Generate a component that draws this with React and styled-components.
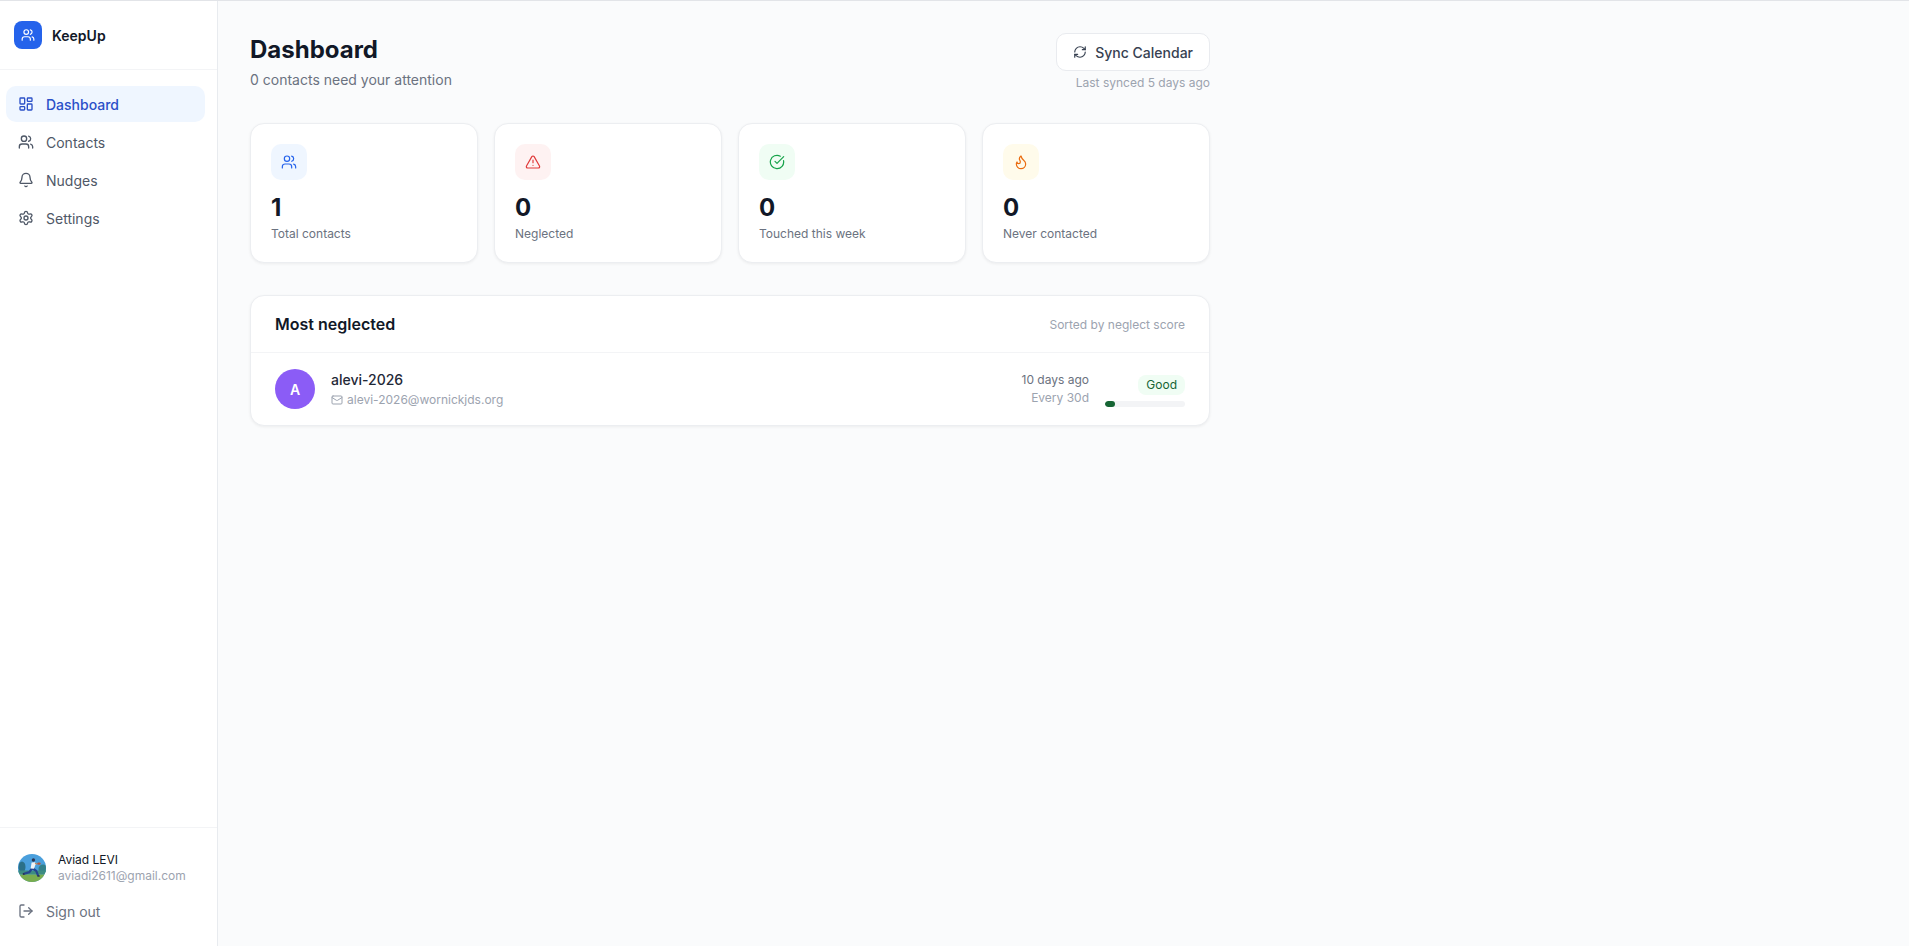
import React from "react";
import styled, { createGlobalStyle } from "styled-components";
import { Users, LayoutDashboard, Bell, Settings, LogOut, RefreshCw, TriangleAlert, CircleCheckBig, Flame, Mail } from "lucide-react";

const Global = createGlobalStyle`
  * { box-sizing: border-box; }
  html, body { margin: 0; padding: 0; height: 100%; }
  body { font-family: Inter, "Liberation Sans", sans-serif; background: #fafbfc; color: #111827; overflow: hidden; }
  #root { height: 100%; }
`;
const Shell = styled.div`display: flex; height: 946px; border-top: 1px solid #e2e4e8;`;
const Sidebar = styled.aside`width: 218px; flex: none; background: #fff; border-right: 1px solid #e8ebef; display: flex; flex-direction: column;`;
const Brand = styled.div`height: 69px; flex: none; display: flex; align-items: center; gap: 10px; padding: 0 14px; border-bottom: 1px solid #f3f4f6;`;
const BrandMark = styled.div`width: 28px; height: 28px; border-radius: 8px; background: #2563eb; color: #fff; display: flex; align-items: center; justify-content: center;`;
const BrandName = styled.span`font-size: 14px; font-weight: 600; color: #111827;`;
const Nav = styled.nav`flex: 1; padding: 16px 12px 0 6px; display: flex; flex-direction: column; gap: 2px;`;
const NavItem = styled.a`height: 36px; display: flex; align-items: center; gap: 12px; padding: 0 12px; border-radius: 10px; font-size: 14px; font-weight: ${p => p.$active ? 500 : 400}; color: ${p => p.$active ? "#2b50c8" : "#4f5867"}; background: ${p => p.$active ? "#eff6ff" : "transparent"};`;
const Foot = styled.div`flex: none; height: 119px; border-top: 1px solid #f3f4f6; padding: 26px 6px 0 6px;`;
const UserRow = styled.div`display: flex; align-items: center; gap: 12px; padding: 0 12px; height: 28px;`;
const UserText = styled.div`display: flex; flex-direction: column; font-size: 12px; line-height: 16px;`;
const UserName = styled.span`color: #111827; font-weight: 400;`;
const UserMail = styled.span`color: #9ca3af;`;
const SignOut = styled.a`height: 36px; margin-top: 11px; display: flex; align-items: center; gap: 12px; padding: 0 12px; font-size: 14px; color: #6b7280;`;
const Main = styled.main`flex: 1; min-width: 0;`;
const Content = styled.div`width: 1024px; padding: 32px;`;
const Header = styled.header`display: flex; justify-content: space-between; align-items: flex-start; margin-bottom: 32px;`;
const Title = styled.h1`margin: 0; font-size: 24px; line-height: 34px; font-weight: 700; color: #111827;`;
const Sub = styled.p`margin: 3px 0 0; font-size: 14px; line-height: 20px; color: #6b7280;`;
const SyncBox = styled.div`display: flex; flex-direction: column; align-items: flex-end; gap: 4px;`;
const SyncButton = styled.button`height: 38px; padding: 0 16px; display: flex; align-items: center; gap: 8px; background: #fff; border: 1px solid #e9ebef; border-radius: 10px; font: 500 14px Inter, sans-serif; color: #374151;`;
const SyncNote = styled.span`font-size: 12px; line-height: 16px; color: #9ca3af;`;
const Stats = styled.section`display: grid; grid-template-columns: repeat(4, 1fr); gap: 16px; margin-bottom: 32px;`;
const Stat = styled.div`background: #fff; border: 1px solid #eceef1; border-radius: 14px; padding: 20px; height: 140px; box-shadow: 0 1px 3px rgba(0,0,0,.06);`;
const StatIcon = styled.div`width: 36px; height: 36px; border-radius: 10px; display: flex; align-items: center; justify-content: center; background: ${p => p.$bg}; color: ${p => p.$fg}; margin-bottom: 12px;`;
const StatValue = styled.div`font-size: 24px; line-height: 32px; font-weight: 700; color: #111827;`;
const StatLabel = styled.div`font-size: 12px; line-height: 16px; color: #6b7280; margin-top: 2px;`;
const Panel = styled.section`background: #fff; border: 1px solid #eceef1; border-radius: 14px; box-shadow: 0 1px 3px rgba(0,0,0,.06);`;
const PanelHead = styled.div`height: 57px; padding: 0 24px; display: flex; align-items: center; justify-content: space-between; border-bottom: 1px solid #f3f4f6;`;
const PanelTitle = styled.h2`margin: 0; font-size: 16px; font-weight: 600; color: #111827;`;
const PanelNote = styled.span`font-size: 12px; color: #9ca3af;`;
const Row = styled.div`height: 72px; padding: 0 24px; display: flex; align-items: center; gap: 16px;`;
const Avatar = styled.div`width: 40px; height: 40px; border-radius: 50%; background: #8b5cf6; color: #fff; font-size: 14px; font-weight: 600; display: flex; align-items: center; justify-content: center; flex: none;`;
const Person = styled.div`flex: 1; min-width: 0;`;
const PersonName = styled.div`font-size: 14px; line-height: 20px; font-weight: 500; color: #1f2937;`;
const PersonMail = styled.div`display: flex; align-items: center; gap: 4px; font-size: 12px; line-height: 16px; color: #9ca3af; margin-top: 2px;`;
const Timing = styled.div`text-align: right; font-size: 12px; line-height: 18px;`;
const Ago = styled.div`color: #6b7280;`;
const Every = styled.div`color: #9ca3af;`;
const Score = styled.div`width: 80px; display: flex; flex-direction: column; align-items: flex-end; gap: 6px; margin-top: 4px;`;
const Badge = styled.span`height: 20px; padding: 0 8px; border-radius: 8px; background: #f0fdf4; color: #166534; font-size: 12px; font-weight: 400; line-height: 20px;`;
const Track = styled.div`width: 100%; height: 6px; border-radius: 999px; background: #f3f4f6; overflow: hidden;`;
const Fill = styled.div`height: 100%; border-radius: 999px; background: #166534;`;

const Photo = () => (
  <svg width="28" height="28" viewBox="0 0 28 28" style={{ flex: "none" }}>
    <defs>
      <clipPath id="ph"><circle cx="14" cy="14" r="14" /></clipPath>
    </defs>
    <g clipPath="url(#ph)">
      <rect width="28" height="28" fill="#4a9fdc" />
      <ellipse cx="4" cy="13" rx="3.5" ry="5.5" fill="#2b7088" />
      <ellipse cx="25" cy="15" rx="4.5" ry="4.5" fill="#33808a" />
      <rect x="0" y="16.5" width="28" height="4" fill="#3d8c82" />
      <rect y="20.5" width="28" height="7.5" fill="#79ad4e" />
      <path d="M14 14.5l-2.6 3.6-5.4 1.6M14.8 14.5l3.4 2.4 1.8 4.4" stroke="#25458f" strokeWidth="2.2" fill="none" strokeLinecap="round" strokeLinejoin="round" />
      <path d="M13.6 8.4l3.6-.2.4 2-1.6 4.6-3.4-.4z" fill="#f1f3f7" />
      <circle cx="15.4" cy="6" r="1.7" fill="#2d3350" />
      <path d="M17 9.4l2.6.8" stroke="#c98a5f" strokeWidth="1.2" fill="none" />
      <ellipse cx="21" cy="9.6" rx="1.8" ry="1.2" fill="#b5563c" />
      <circle cx="5.6" cy="20" r="1" fill="#2d3350" />
      <ellipse cx="20.6" cy="22" rx="1.5" ry=".8" fill="#2d3350" />
    </g>
  </svg>
);

const stats = [
  { Icon: Users, bg: "#eff6ff", fg: "#2563eb", value: 1, label: "Total contacts" },
  { Icon: TriangleAlert, bg: "#fef2f2", fg: "#e03a3a", value: 0, label: "Neglected" },
  { Icon: CircleCheckBig, bg: "#f0fdf4", fg: "#16a34a", value: 0, label: "Touched this week" },
  { Icon: Flame, bg: "#fffbeb", fg: "#ea6c10", value: 0, label: "Never contacted" },
];
const nav = [
  { Icon: LayoutDashboard, label: "Dashboard", active: true },
  { Icon: Users, label: "Contacts" },
  { Icon: Bell, label: "Nudges" },
  { Icon: Settings, label: "Settings" },
];

export default function App() {
  return (
    <>
      <Global />
      <Shell>
        <Sidebar>
          <Brand>
            <BrandMark><Users size={14} /></BrandMark>
            <BrandName>KeepUp</BrandName>
          </Brand>
          <Nav>
            {nav.map(({ Icon, label, active }) => (
              <NavItem key={label} $active={active}><Icon size={16} />{label}</NavItem>
            ))}
          </Nav>
          <Foot>
            <UserRow>
              <Photo />
              <UserText>
                <UserName>Aviad LEVI</UserName>
                <UserMail>aviadi2611@gmail.com</UserMail>
              </UserText>
            </UserRow>
            <SignOut><LogOut size={16} />Sign out</SignOut>
          </Foot>
        </Sidebar>
        <Main>
          <Content>
            <Header>
              <div>
                <Title>Dashboard</Title>
                <Sub>0 contacts need your attention</Sub>
              </div>
              <SyncBox>
                <SyncButton><RefreshCw size={14} />Sync Calendar</SyncButton>
                <SyncNote>Last synced 5 days ago</SyncNote>
              </SyncBox>
            </Header>
            <Stats>
              {stats.map(({ Icon, bg, fg, value, label }) => (
                <Stat key={label}>
                  <StatIcon $bg={bg} $fg={fg}><Icon size={16} strokeWidth={1.8} /></StatIcon>
                  <StatValue>{value}</StatValue>
                  <StatLabel>{label}</StatLabel>
                </Stat>
              ))}
            </Stats>
            <Panel>
              <PanelHead>
                <PanelTitle>Most neglected</PanelTitle>
                <PanelNote>Sorted by neglect score</PanelNote>
              </PanelHead>
              <Row>
                <Avatar>A</Avatar>
                <Person>
                  <PersonName>alevi-2026</PersonName>
                  <PersonMail><Mail size={12} />alevi-2026@wornickjds.org</PersonMail>
                </Person>
                <Timing>
                  <Ago>10 days ago</Ago>
                  <Every>Every 30d</Every>
                </Timing>
                <Score>
                  <Badge>Good</Badge>
                  <Track><Fill style={{ width: "12%" }} /></Track>
                </Score>
              </Row>
            </Panel>
          </Content>
        </Main>
      </Shell>
    </>
  );
}
